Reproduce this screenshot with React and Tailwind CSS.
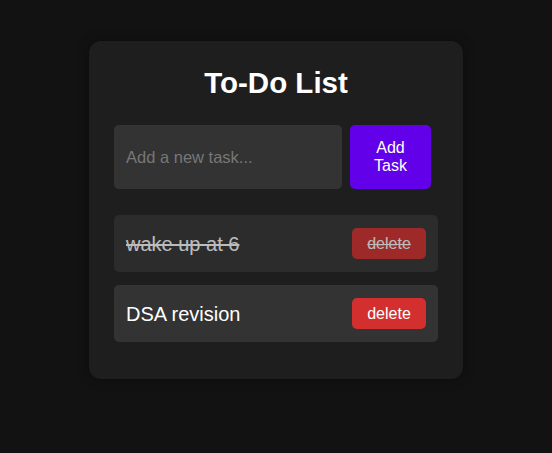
export default function App() {
  const font = { fontFamily: '"Liberation Sans", Arial, sans-serif' };
  return (
    <div className="min-h-[453px] w-full bg-[#121212] flex justify-center pt-[41px]" style={font}>
      <div className="w-[374px] h-[338px] bg-[#1e1e1e] rounded-[12px] px-[25px] pt-[25px] flex flex-col shadow-[0_0_12px_rgba(0,0,0,0.4)]">
        <h1 className="text-[29.5px] leading-[33px] font-bold text-white text-center">To-Do List</h1>
        <div className="flex mt-[26px] gap-[8px]">
          <div className="w-[228px] h-[64px] bg-[#333333] rounded-[5px] flex items-center pl-[12px]">
            <input
              className="bg-transparent outline-none text-[16.5px] text-white placeholder:text-[#777777] w-full"
              placeholder="Add a new task..."
              style={font}
            />
          </div>
          <button className="w-[81px] h-[64px] bg-[#6200ea] rounded-[5px] text-white text-[16px] leading-[18px] flex items-center justify-center text-center">
            Add<br />Task
          </button>
        </div>
        <div className="mt-[26px] flex flex-col gap-[13px]">
          <div className="h-[57px] bg-[#333333] rounded-[5px] flex items-center justify-between pl-[12px] pr-[12px] opacity-70">
            <span className="text-[20px] text-white line-through">wake up at 6</span>
            <button className="w-[74px] h-[31px] bg-[#d32f2f] rounded-[5px] text-white text-[16px] line-through">delete</button>
          </div>
          <div className="h-[57px] bg-[#333333] rounded-[5px] flex items-center justify-between pl-[12px] pr-[12px]">
            <span className="text-[20px] text-white">DSA revision</span>
            <button className="w-[74px] h-[31px] bg-[#d32f2f] rounded-[5px] text-white text-[16px]">delete</button>
          </div>
        </div>
      </div>
    </div>
  );
}
